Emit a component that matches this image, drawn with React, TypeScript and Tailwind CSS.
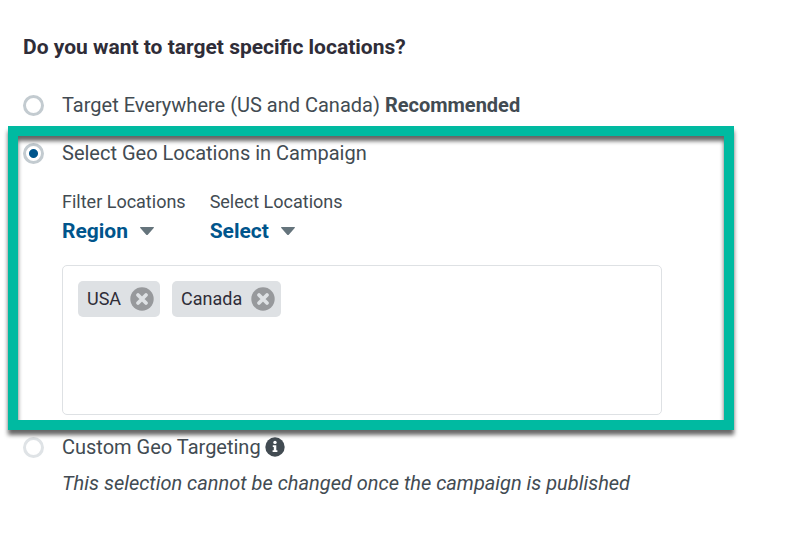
import { useState } from "react";

const radioClass =
  "m-0 size-[21px] shrink-0 appearance-none rounded-full border-3 border-[#c3cbd0] bg-white checked:bg-[radial-gradient(circle,#00558c_4px,#fff_5px)] disabled:border-[#dfe3e6]";

function Picker({ id, label, options }: { id: string; label: string; options: string[] }) {
  return (
    <div className="flex flex-col">
      <label htmlFor={id} className="text-[18px] leading-7">
        {label}
      </label>
      <div className="flex items-center gap-3">
        <select
          id={id}
          className="field-sizing-content h-[30px] appearance-none bg-transparent text-[21px] leading-[30px] font-bold text-[#00558c]"
        >
          {options.map((option) => (
            <option key={option}>{option}</option>
          ))}
        </select>
        <svg className="h-2 w-[14px]" viewBox="0 0 14 8" aria-hidden="true">
          <path d="M0.6 0H13.4C14 0 14.2 0.6 13.7 1.1L8 7.4Q7 8.4 6 7.4L0.3 1.1C-0.2 0.6 0 0 0.6 0Z" fill="#65747c" />
        </svg>
      </div>
    </div>
  );
}

function Chip({ name, onRemove }: { name: string; onRemove: () => void }) {
  return (
    <li className="flex h-9 items-center gap-[9px] rounded-[5px] bg-[#dee1e4] pr-[6px] pl-[9px] text-[18px] leading-6 text-[#2f2d38]">
      {name}
      <button type="button" aria-label={`Remove ${name}`} onClick={onRemove}>
        <svg className="block size-6" viewBox="0 0 24 24" aria-hidden="true">
          <circle cx="12" cy="12" r="11.7" fill="#97999c" />
          <path d="M8 8L16 16M16 8L8 16" stroke="#dee1e4" strokeWidth="3.8" strokeLinecap="round" />
        </svg>
      </button>
    </li>
  );
}

export default function App() {
  const [choice, setChoice] = useState("select");
  const [places, setPlaces] = useState(["USA", "Canada"]);

  return (
    <main className="min-h-screen bg-white px-[23px] pt-8 pb-10 font-[Roboto,'Liberation_Sans',sans-serif] text-[20px] text-[#424b52]">
      <fieldset>
        <legend className="text-[21px] leading-[30px] font-bold text-[#2f2d38]">
          Do you want to target specific locations?
        </legend>

        <div className="mt-7 flex items-center gap-[18px] leading-[30px]">
          <input
            id="everywhere"
            type="radio"
            name="geo"
            className={radioClass}
            checked={choice === "everywhere"}
            onChange={() => setChoice("everywhere")}
          />
          <label htmlFor="everywhere">
            Target Everywhere (US and Canada) <strong className="font-bold">Recommended</strong>
          </label>
        </div>

        <div className="relative mt-[18px]">
          <div className="flex items-center gap-[18px] leading-[30px]">
            <input
              id="select"
              type="radio"
              name="geo"
              className={radioClass}
              checked={choice === "select"}
              onChange={() => setChoice("select")}
            />
            <label htmlFor="select">Select Geo Locations in Campaign</label>
          </div>
          <div className="mt-5 ml-[39px]">
            <div className="flex gap-6">
              <Picker id="filter" label="Filter Locations" options={["Region"]} />
              <Picker id="locations" label="Select Locations" options={["Select"]} />
            </div>
            <ul className="mt-[19px] flex min-h-[150px] max-w-[600px] flex-wrap content-start gap-3 rounded-[5px] border border-[#dee1e4] p-[15px]">
              {places.map((place) => (
                <Chip
                  key={place}
                  name={place}
                  onRemove={() => setPlaces(places.filter((item) => item !== place))}
                />
              ))}
            </ul>
          </div>
          <div className="pointer-events-none absolute -top-3 right-[35px] -bottom-[15px] -left-[15px] border-10 border-[#00baa1] drop-shadow-[0_5px_2px_rgba(0,0,0,0.6)]" />
        </div>

        <div className="mt-[17px] flex items-center gap-[18px] leading-[30px]">
          <input id="custom" type="radio" name="geo" className={radioClass} disabled />
          <label htmlFor="custom" className="flex items-center gap-1">
            Custom Geo Targeting
            <svg className="size-5" viewBox="0 0 20 20" aria-hidden="true">
              <circle cx="10" cy="10" r="9.7" fill="#424b52" />
              <circle cx="10" cy="5.4" r="1.7" fill="#fff" />
              <path d="M7.8 8.2H11.3V13.2H12.4V15H7.6V13.2H8.8V10H7.8Z" fill="#fff" />
            </svg>
          </label>
        </div>
        <p className="mt-[6px] ml-[39px] leading-[30px] italic">
          This selection cannot be changed once the campaign is published
        </p>
      </fieldset>
    </main>
  );
}
